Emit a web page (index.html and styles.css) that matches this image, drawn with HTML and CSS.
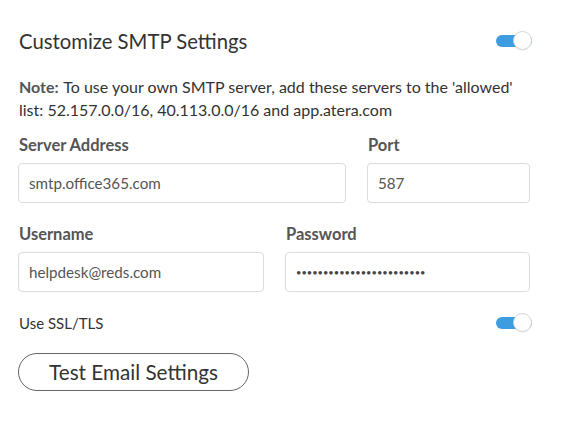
FILE: index.html
```html
<!DOCTYPE html>
<html>
<head>
<meta charset="utf-8">
<link rel="stylesheet" href="styles.css">
</head>
<body>
<div class="panel">
  <div class="head">
    <h2 class="title">Customize SMTP Settings</h2>
    <span class="toggle"><span class="knob"></span></span>
  </div>
  <p class="note"><b class="note-b">Note:</b> To use your own SMTP server, add these servers to the 'allowed' list: 52.157.0.0/16, 40.113.0.0/16 and app.atera.com</p>
  <div class="row row-a">
    <div class="field">
      <label class="label">Server Address</label>
      <div class="input">smtp.office365.com</div>
    </div>
    <div class="field">
      <label class="label">Port</label>
      <div class="input">587</div>
    </div>
  </div>
  <div class="row row-b">
    <div class="field">
      <label class="label">Username</label>
      <div class="input">helpdesk@reds.com</div>
    </div>
    <div class="field">
      <label class="label">Password</label>
      <div class="input pass">••••••••••••••••••••••••</div>
    </div>
  </div>
  <div class="ssl">
    <span class="ssl-label">Use SSL/TLS</span>
    <span class="toggle"><span class="knob"></span></span>
  </div>
  <button class="btn">Test Email Settings</button>
</div>
</body>
</html>
```
FILE: styles.css
```css
* { box-sizing: border-box; }
body {
  margin: 0;
  background: #fff;
  font-family: "Lato", "Noto Sans", sans-serif;
  color: #444;
}
.panel {
  width: 530px;
  padding: 26px 0 0 18px;
}
.head {
  display: flex;
  align-items: center;
  justify-content: space-between;
  height: 30px;
}
.title {
  margin: 0 0 0 1px;
  font-size: 20.3px;
  font-weight: 400;
  color: #333;
}
.toggle {
  position: relative;
  display: inline-block;
  width: 36px;
  height: 12px;
  margin-right: -2px;
  border-radius: 6px;
  background: #3d9de0;
}
.knob {
  position: absolute;
  right: 0;
  top: -4px;
  width: 19px;
  height: 19px;
  border-radius: 50%;
  background: #fff;
  border: 1px solid #d6d6d6;
  box-shadow: 0 1px 1px rgba(0,0,0,0.05);
}
.note {
  margin: 19px 0 0 1px;
  font-size: 16px;
  line-height: 23px;
  color: #333;
}
.note-b { color: #555; margin-right: 1px; }
.row {
  display: grid;
  gap: 21px;
}
.row-a { grid-template-columns: 328px 163px; margin-top: 14px; }
.row-b { grid-template-columns: 246px 245px; margin-top: 21px; }
.label {
  display: block;
  font-size: 16.5px;
  font-weight: 700;
  color: #555;
  line-height: 20px;
  margin-bottom: 8px;
  padding-left: 1px;
}
.input {
  height: 40px;
  border: 1px solid #dcdcdc;
  border-radius: 4px;
  padding: 0 10px;
  display: flex;
  align-items: center;
  font-size: 15.2px;
  color: #555;
}
.pass { font-size: 9.3px; letter-spacing: 0; color: #444; }
.ssl {
  display: flex;
  justify-content: space-between;
  align-items: center;
  margin-top: 21px;
  height: 20px;
}
.ssl-label { font-size: 15px; color: #333; padding-left: 1px; }
.btn {
  display: block;
  margin-top: 20px;
  width: 231px;
  height: 38px;
  border: 1px solid #666;
  border-radius: 19px;
  background: #fff;
  font-family: inherit;
  font-size: 20.7px;
  color: #333;
  padding: 0;
}
```
